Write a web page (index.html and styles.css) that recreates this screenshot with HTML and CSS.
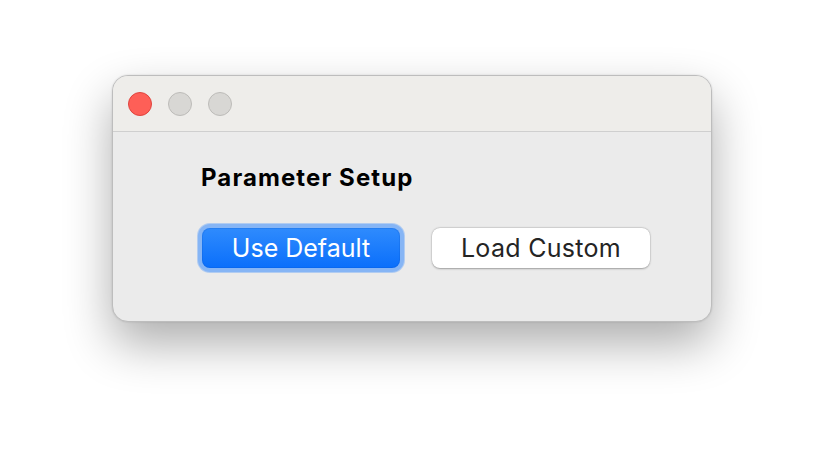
FILE: index.html
```html
<!DOCTYPE html>
<html>
<head>
<meta charset="utf-8">
<link rel="stylesheet" href="styles.css">
</head>
<body>
<div class="window">
  <div class="titlebar">
    <span class="light red"></span>
    <span class="light"></span>
    <span class="light"></span>
  </div>
  <div class="content">
    <div class="heading">Parameter Setup</div>
    <div class="buttons">
      <div class="focus"><button class="btn primary">Use Default</button></div>
      <button class="btn secondary">Load Custom</button>
    </div>
  </div>
</div>
</body>
</html>
```

FILE: styles.css
```css
html, body {
  margin: 0;
  padding: 0;
  background: #ffffff;
  width: 824px;
  height: 470px;
  overflow: hidden;
}
body {
  padding: 75px 0 0 112px;
  box-sizing: border-box;
  font-family: "Inter", "Liberation Sans", sans-serif;
}
.window {
  width: 600px;
  height: 247px;
  box-sizing: border-box;
  border: 1px solid #bdbdbd;
  border-radius: 16px;
  background: #ebebeb;
  overflow: hidden;
  box-shadow: 0 22px 48px rgba(0,0,0,0.32), 0 0 2px rgba(0,0,0,0.15);
  display: flex;
  flex-direction: column;
}
.titlebar {
  height: 56px;
  flex: none;
  background: #eeedea;
  border-bottom: 1px solid #cfcfcf;
  display: flex;
  align-items: center;
  gap: 16px;
  padding-left: 15px;
  box-sizing: border-box;
}
.light {
  width: 24px;
  height: 24px;
  border-radius: 50%;
  box-sizing: border-box;
  background: #d8d7d4;
  border: 1px solid #bdbcb9;
}
.light.red {
  background: #fe5f57;
  border-color: #e0443e;
}
.content {
  padding: 32px 0 0 88px;
}
.heading {
  font-size: 24px;
  font-weight: 700;
  color: #000;
  line-height: 28px;
  letter-spacing: 1.1px;
}
.buttons {
  display: flex;
  align-items: center;
  gap: 28px;
  margin-top: 32px;
  margin-left: -3px;
}
.focus {
  padding: 4px;
  border-radius: 12px;
  background: #86b5f5;
  box-shadow: 0 0 0 1px rgba(138,184,245,0.6);
  display: flex;
}
.btn {
  font-family: "Inter", "Liberation Sans", sans-serif;
  font-size: 25px;
  height: 40px;
  border-radius: 8px;
  border: none;
  padding: 0;
  margin: 0;
  display: flex;
  align-items: center;
  justify-content: center;
}
.primary {
  width: 198px;
  color: #ffffff;
  background: linear-gradient(#2f8bfd, #0a6ffb);
  box-shadow: inset 0 0 0 1px rgba(0,80,200,0.2);
}
.secondary {
  width: 218px;
  color: #242424;
  letter-spacing: 0.3px;
  background: #ffffff;
  box-shadow: 0 0.5px 2px rgba(0,0,0,0.3), 0 0 0 0.5px rgba(0,0,0,0.08);
}
```
